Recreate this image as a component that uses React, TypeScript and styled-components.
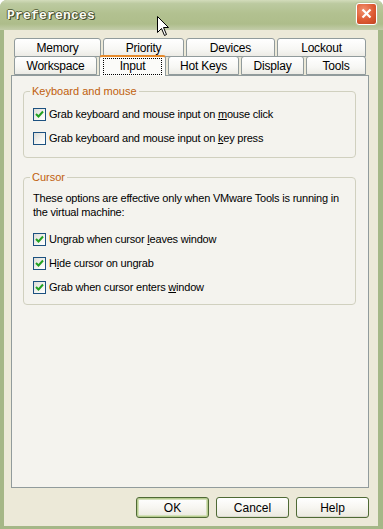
import * as React from "react";
import styled, { createGlobalStyle } from "styled-components";

const GlobalStyle = createGlobalStyle`
  html, body {
    margin: 0;
    padding: 0;
    background: #ffffff;
  }
  body {
    font-family: "Liberation Sans", Arial, sans-serif;
    font-size: 11px;
    color: #000000;
  }
`;

const Window = styled.div`
  position: relative;
  width: 383px;
  height: 529px;
  display: flex;
  flex-direction: column;
  background: #a5b787;
  border-radius: 7px 7px 0 0;
  overflow: hidden;
`;

const TitleBar = styled.div`
  height: 30px;
  flex: none;
  display: flex;
  align-items: center;
  padding: 0 6px 0 7px;
  background: linear-gradient(
    to bottom,
    #d3dcbb 0%,
    #bccaa0 12%,
    #b2c190 45%,
    #aebd8b 80%,
    #c3cca9 100%
  );
`;

const Title = styled.div`
  flex: 1;
  font-family: "Liberation Mono", "Courier New", monospace;
  font-weight: bold;
  font-size: 13px;
  letter-spacing: 0.2px;
  color: #fbfbf4;
  text-shadow: 1px 1px 0 #3f4a28, -1px 0 0 #5c6842, 0 -1px 0 #5c6842, 1px 0 0 #5c6842;
  padding-top: 1px;
`;

const CloseButton = styled.div`
  width: 19px;
  height: 20px;
  margin-top: -3px;
  border: 1px solid #ffffff;
  border-radius: 3px;
  background: radial-gradient(circle at 35% 30%, #f29270 0%, #de5b33 55%, #c04320 100%);
  display: flex;
  align-items: center;
  justify-content: center;
  box-shadow: 0 0 0 1px #b7c39b;
`;

const Body = styled.div`
  flex: 1;
  display: flex;
  flex-direction: column;
  margin: 0 5px 3px 4px;
  padding: 8px 9px 8px 7px;
  background: #ece9d8;
`;

const TabRow = styled.div<{ $h: number }>`
  display: flex;
  gap: 2px;
  padding-left: 3px;
  height: ${(p) => p.$h}px;
  align-items: flex-end;
`;

const Tab = styled.div<{ $w: number; $active?: boolean }>`
  position: relative;
  box-sizing: border-box;
  width: ${(p) => p.$w}px;
  height: ${(p) => (p.$active ? 21 : 19)}px;
  margin-bottom: ${(p) => (p.$active ? -1 : 0)}px;
  z-index: ${(p) => (p.$active ? 2 : 1)};
  display: flex;
  align-items: ${(p) => (p.$active ? "flex-start" : "center")};
  justify-content: center;
  padding-top: 1px;
  border: 1px solid #919b9c;
  border-bottom: ${(p) => (p.$active ? "none" : "1px solid #919b9c")};
  border-top: ${(p) => (p.$active ? "2px solid #e68b2c" : "1px solid #919b9c")};
  border-radius: 3px 3px 0 0;
  background: ${(p) =>
    p.$active
      ? "#fbfbf9"
      : "linear-gradient(to bottom, #ffffff 0%, #f7f7f4 60%, #ecebe5 100%)"};
  font-size: 12px;
  letter-spacing: -0.2px;
  color: #000000;
  white-space: nowrap;
`;

const FocusLabel = styled.span`
  border: 1px dotted #000000;
  padding: 0 16px 1px 16px;
  line-height: 14px;
`;

const Panel = styled.div`
  flex: 1;
  position: relative;
  z-index: 1;
  border: 1px solid #919b9c;
  background: #f4f3ee;
  padding: 9px 12px 0 11px;
  display: flex;
  flex-direction: column;
  gap: 13px;
`;

const Group = styled.fieldset<{ $pb: number }>`
  margin: 0;
  min-width: 0;
  padding: 10px 9px ${(p) => p.$pb}px 9px;
  border: 1px solid #d0d0bf;
  border-radius: 4px;
`;

const Legend = styled.legend`
  color: #c0600c;
  font-size: 11px;
  line-height: 13px;
  padding: 0 2px;
  margin-left: -3px;
`;

const Note = styled.div`
  font-size: 11px;
  line-height: 14px;
  letter-spacing: -0.2px;
  white-space: nowrap;
  margin: -3px 0 14px 0;
`;

const CheckList = styled.div`
  display: flex;
  flex-direction: column;
  gap: 11px;
`;

const CheckRow = styled.label`
  display: flex;
  align-items: center;
  gap: 3px;
  height: 13px;
  font-size: 11px;
  line-height: 13px;
  letter-spacing: -0.2px;
  white-space: nowrap;
`;

const Box = styled.span`
  box-sizing: border-box;
  width: 13px;
  height: 13px;
  flex: none;
  border: 1px solid #1c5180;
  background: linear-gradient(135deg, #dcdcd7 0%, #f4f4f1 60%, #ffffff 100%);
  display: flex;
  align-items: center;
  justify-content: center;
`;

const Key = styled.u`
  text-decoration: underline;
  text-underline-offset: 1px;
`;

const ButtonRow = styled.div`
  display: flex;
  justify-content: flex-end;
  gap: 7px;
  margin-top: 9px;
`;

const Button = styled.div<{ $default?: boolean }>`
  box-sizing: border-box;
  width: 73px;
  height: 21px;
  display: flex;
  align-items: center;
  justify-content: center;
  border: 1px solid #4f6a35;
  border-radius: 3px;
  background: linear-gradient(to bottom, #ffffff 0%, #f7f6f1 50%, #ebe9df 100%);
  box-shadow: ${(p) =>
    p.$default ? "inset 0 0 0 1px #b7cc8f, inset 0 0 0 2px #d3e0b9" : "inset 0 -1px 0 #dcdad0"};
  font-size: 12px;
  padding-top: 1px;
`;

const Pointer = styled.svg`
  position: absolute;
  left: 157px;
  top: 16px;
  z-index: 10;
`;

const Check = () => (
  <svg width="9" height="9" viewBox="0 0 9 9">
    <path d="M1 4 L3.5 6.5 L8 1.5" fill="none" stroke="#21a121" strokeWidth="2" />
  </svg>
);

type CheckItemProps = {
  checked: boolean;
  children: React.ReactNode;
};

const CheckItem: React.FC<CheckItemProps> = ({ checked, children }) => (
  <CheckRow>
    <Box>{checked && <Check />}</Box>
    <span>{children}</span>
  </CheckRow>
);

const topTabs = [
  { label: "Memory", w: 87 },
  { label: "Priority", w: 81 },
  { label: "Devices", w: 89 },
  { label: "Lockout", w: 89 },
];

const bottomTabs = [
  { label: "Workspace", w: 83 },
  { label: "Input", w: 67, active: true },
  { label: "Hot Keys", w: 71 },
  { label: "Display", w: 63 },
  { label: "Tools", w: 60 },
];

export default function App() {
  return (
    <React.Fragment>
      <GlobalStyle />
      <Window>
        <TitleBar>
          <Title>Preferences</Title>
          <CloseButton>
            <svg width="11" height="11" viewBox="0 0 11 11">
              <path d="M1.5 1.5 L9.5 9.5 M9.5 1.5 L1.5 9.5" stroke="#ffffff" strokeWidth="2.2" />
            </svg>
          </CloseButton>
        </TitleBar>
        <Body>
          <TabRow $h={19}>
            {topTabs.map((t) => (
              <Tab key={t.label} $w={t.w}>
                {t.label}
              </Tab>
            ))}
          </TabRow>
          <TabRow $h={18}>
            {bottomTabs.map((t) =>
              t.active ? (
                <Tab key={t.label} $w={t.w} $active>
                  <FocusLabel>{t.label}</FocusLabel>
                </Tab>
              ) : (
                <Tab key={t.label} $w={t.w}>
                  {t.label}
                </Tab>
              )
            )}
          </TabRow>
          <Panel>
            <Group $pb={12}>
              <Legend>Keyboard and mouse</Legend>
              <CheckList>
                <CheckItem checked>
                  Grab keyboard and mouse input on <Key>m</Key>ouse click
                </CheckItem>
                <CheckItem checked={false}>
                  Grab keyboard and mouse input on <Key>k</Key>ey press
                </CheckItem>
              </CheckList>
            </Group>
            <Group $pb={10}>
              <Legend>Cursor</Legend>
              <Note>
                These options are effective only when VMware Tools is running in
                <br />
                the virtual machine:
              </Note>
              <CheckList>
                <CheckItem checked>
                  Ungrab when cursor <Key>l</Key>eaves window
                </CheckItem>
                <CheckItem checked>
                  H<Key>i</Key>de cursor on ungrab
                </CheckItem>
                <CheckItem checked>
                  Grab when cursor enters <Key>w</Key>indow
                </CheckItem>
              </CheckList>
            </Group>
          </Panel>
          <ButtonRow>
            <Button $default>OK</Button>
            <Button>Cancel</Button>
            <Button>Help</Button>
          </ButtonRow>
        </Body>
        <Pointer width="13" height="21" viewBox="0 0 13 21">
          <path
            d="M0.5 0.5 L0.5 16.5 L4.5 12.5 L7.5 19.5 L9.5 18.5 L6.5 11.5 L11.5 11.5 Z"
            fill="#ffffff"
            stroke="#000000"
            strokeWidth="1"
            strokeLinejoin="miter"
          />
        </Pointer>
      </Window>
    </React.Fragment>
  );
}
